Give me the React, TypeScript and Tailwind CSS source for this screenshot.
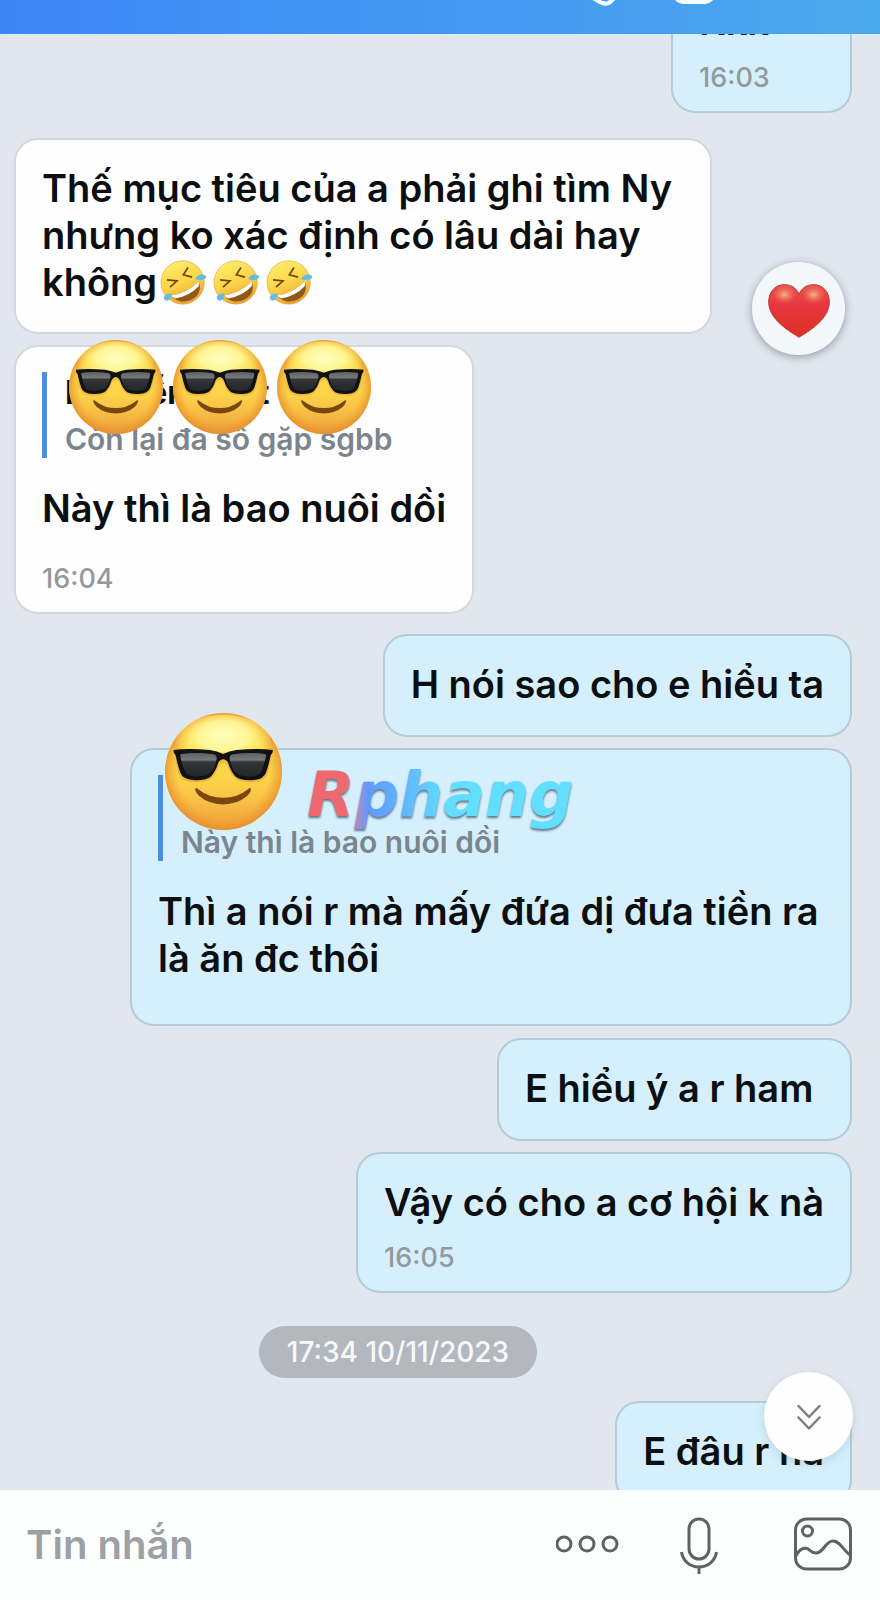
import type { ReactNode } from "react";

function CoolFace({ id, className }: { id: string; className: string }) {
  return (
    <svg viewBox="15 15 352 352" className={className} role="img" aria-label="😎">
      <defs>
        <linearGradient id={`${id}-skin`} x1="0" y1="0" x2="0" y2="1">
          <stop offset="0" stopColor="#fbdc58" />
          <stop offset="0.55" stopColor="#fdd54a" />
          <stop offset="0.75" stopColor="#f9c044" />
          <stop offset="1" stopColor="#ee9e3a" />
        </linearGradient>
        <radialGradient id={`${id}-rim`} cx="0.5" cy="0.5" r="0.5">
          <stop offset="0.76" stopColor="#f0a030" stopOpacity="0" />
          <stop offset="1" stopColor="#e58a2b" stopOpacity="0.75" />
        </radialGradient>
        <radialGradient id={`${id}-shine`} cx="0.5" cy="0.4" r="0.55">
          <stop offset="0" stopColor="#fffdc0" />
          <stop offset="0.5" stopColor="#fffba0" stopOpacity="0.85" />
          <stop offset="1" stopColor="#fdf04f" stopOpacity="0" />
        </radialGradient>
        <linearGradient id={`${id}-lens`} x1="0" y1="0" x2="0" y2="1">
          <stop offset="0" stopColor="#606163" />
          <stop offset="0.3" stopColor="#77787a" />
          <stop offset="0.38" stopColor="#343537" />
          <stop offset="1" stopColor="#242527" />
        </linearGradient>
      </defs>
      <circle cx="191" cy="191" r="176" fill={`url(#${id}-skin)`} />
      <circle cx="191" cy="191" r="176" fill={`url(#${id}-rim)`} />
      <ellipse cx="191" cy="100" rx="142" ry="80" fill={`url(#${id}-shine)`} />
      <path
        d="M45 134 H335 Q332 175 324 198 Q316 224 275 224 Q238 224 223 210 Q210 195 203 172 Q190 160 177 172 Q170 195 157 210 Q142 224 105 224 Q64 224 56 198 Q48 175 45 134Z"
        fill="#d98b1c"
        opacity="0.4"
      />
      <path
        d="M41 126 Q80 121 150 126 Q172 129 190 138 Q208 129 230 126 Q300 121 339 126 Q341 134 333 142 Q326 175 319 194 Q312 216 275 217 Q240 218 226 205 Q212 190 205 165 Q199 154 190 154 Q181 154 175 165 Q168 190 154 205 Q140 218 105 217 Q68 216 61 194 Q54 175 47 142 Q39 134 41 126Z"
        fill="#111213"
      />
      <path d="M64 138 Q110 132 160 139 Q173 142 170 155 Q165 184 149 197 Q138 206 108 206 Q79 205 74 189 Q65 165 61 144 Q60 139 64 138Z" fill={`url(#${id}-lens)`} />
      <path d="M316 138 Q270 132 220 139 Q207 142 210 155 Q215 184 231 197 Q242 206 272 206 Q301 205 306 189 Q315 165 319 144 Q320 139 316 138Z" fill={`url(#${id}-lens)`} />
      <path d="M106 242 Q109 238 116 245 Q148 270 190 270 Q232 270 264 245 Q270 238 273 242 Q276 250 262 265 Q232 290 190 290 Q147 290 118 265 Q104 250 106 242Z" fill="#7a470f" />
    </svg>
  );
}

function RoflFace({ id }: { id: string }) {
  return (
    <svg viewBox="14 25 141 134" className="mx-[3px] inline-block h-[45px] w-[47px] align-[-9px]" role="img" aria-label="🤣">
      <defs>
        <linearGradient id={id} x1="0.3" y1="0" x2="0.7" y2="1">
          <stop offset="0" stopColor="#ffee6a" />
          <stop offset="0.5" stopColor="#fbd448" />
          <stop offset="1" stopColor="#ec9734" />
        </linearGradient>
      </defs>
      <circle cx="82" cy="92" r="65" fill={`url(#${id})`} stroke="#e6a440" strokeWidth="2" />
      <path d="M35 84 L65 87 L44 106" fill="none" stroke="#704411" strokeWidth="5" />
      <path d="M98 47 L84 69 L110 76" fill="none" stroke="#704411" strokeWidth="5" />
      <path d="M46 131 Q100 122 130 88 Q140 112 124 132 Q104 153 74 148 Q56 143 46 131Z" fill="#8f5a17" />
      <path d="M46 131 Q100 122 130 88 Q133 95 130 103 Q104 131 60 140 Q51 136 46 131Z" fill="#fffdf6" />
      <path d="M120 83 Q122 72 136 68 Q150 66 153 75 Q150 88 120 83Z" fill="#62bce8" />
      <path d="M49 124 Q48 142 37 146 Q26 147 25 136 Q28 125 49 124Z" fill="#62bce8" />
    </svg>
  );
}

function Heart() {
  return (
    <svg viewBox="0 0 186 162" className="h-[54px] w-[62px]" aria-hidden="true">
      <defs>
        <linearGradient id="heart-fill" x1="0" y1="0" x2="0" y2="1">
          <stop offset="0" stopColor="#e8544c" />
          <stop offset="0.4" stopColor="#e8363f" />
          <stop offset="1" stopColor="#dc3122" />
        </linearGradient>
        <radialGradient id="heart-shine">
          <stop offset="0" stopColor="#f9b48b" />
          <stop offset="1" stopColor="#ee6f55" stopOpacity="0" />
        </radialGradient>
      </defs>
      <path
        d="M93 160 C70 145 2 108 2 54 C2 24 21 2 49 2 C71 2 86 13 93 31 C100 13 115 2 137 2 C165 2 184 24 184 54 C184 108 116 145 93 160Z"
        fill="url(#heart-fill)"
        stroke="#bd3936"
        strokeWidth="3"
      />
      <ellipse cx="49" cy="32" rx="36" ry="28" fill="url(#heart-shine)" />
      <ellipse cx="137" cy="32" rx="36" ry="28" fill="url(#heart-shine)" />
    </svg>
  );
}

type BubbleProps = { mine?: boolean; className?: string; children: ReactNode };

function Bubble({ mine, className = "", children }: BubbleProps) {
  const side = mine ? "self-end border-[#b5cbd6] bg-[#d5effc]" : "self-start border-[#d4d7dc] bg-[#fefefe]";
  return (
    <article className={`relative w-fit rounded-3xl border-2 px-[26px] pt-[25px] ${side} ${className}`}>{children}</article>
  );
}

function Message({ children }: { children: ReactNode }) {
  return <p className="text-[38px] leading-[47px] font-semibold text-[#0c0f11]">{children}</p>;
}

function Time({ className, children }: { className: string; children: string }) {
  return <time className={`block text-[27px] leading-[30px] font-medium text-[#94999d] ${className}`}>{children}</time>;
}

function Quote({ name, text }: { name?: string; text: string }) {
  return (
    <blockquote className="mb-[27px] flex h-[86px] flex-col justify-end gap-2 border-l-[5px] border-[#4c8edb] pl-[18px] leading-[38px]">
      {name && <span className="text-[32px] font-bold text-[#0c0f11]">{name}</span>}
      <span className="text-[30px] font-semibold text-[#7b858e]">{text}</span>
    </blockquote>
  );
}

export default function App() {
  return (
    <div className="flex h-screen flex-col overflow-hidden bg-[#e1e7ef] font-['Inter','Liberation_Sans',sans-serif]">
      <header className="flex h-[34px] shrink-0 items-end justify-end gap-14 overflow-hidden bg-linear-to-r from-[#3e86f6] to-[#4ba9ed] pr-[163px] pb-7">
        <button aria-label="Gọi thoại" className="shrink-0">
          <svg viewBox="0 0 44 44" className="size-11" fill="none" stroke="#fafdff" strokeWidth="4">
            <path d="M12 4 C7 5 3 9 5 16 C9 28 18 36 29 41 C35 43 39 40 42 34 L32 25 L27 31 C21 28 17 23 15 17 L19 12Z" />
          </svg>
        </button>
        <button aria-label="Gọi video" className="shrink-0">
          <svg viewBox="0 0 44 44" className="size-11" stroke="#fafdff" strokeWidth="4">
            <rect x="2" y="6" width="38" height="34" rx="8" fill="#b4cfe0" />
          </svg>
        </button>
      </header>

      <main className="relative flex min-h-0 flex-1 flex-col overflow-hidden pr-7 pl-[14px]">
        <Bubble mine className="-mt-[63px] min-w-[181px] shrink-0 pb-[18px]">
          <Message>Kkk</Message>
          <Time className="mt-[18px]">16:03</Time>
        </Bubble>

        <div className="relative mt-[25px] flex shrink-0">
          <Bubble className="max-w-[698px] pb-[26px]">
            <Message>
              Thế mục tiêu của a phải ghi tìm Ny nhưng ko xác định có lâu dài hay không
              <RoflFace id="rofl-1" />
              <RoflFace id="rofl-2" />
              <RoflFace id="rofl-3" />
            </Message>
          </Bubble>
          <button
            aria-label="Thả tim"
            className="absolute top-[124px] right-[7px] flex size-[93px] items-center justify-center rounded-full bg-[#f5f8fa] pt-1 shadow-[0_2px_8px_rgba(50,60,75,0.45)]"
          >
            <Heart />
          </button>
        </div>

        <Bubble className="mt-[11px] shrink-0 pb-[18px]">
          <Quote name="Nguyễn Nhật" text="Còn lại đa số gặp sgbb" />
          <Message>Này thì là bao nuôi dồi</Message>
          <Time className="mt-8">16:04</Time>
          <div className="absolute -top-[7px] left-[53px] flex gap-[10px]">
            <CoolFace id="cool-1" className="size-[94px]" />
            <CoolFace id="cool-2" className="size-[94px]" />
            <CoolFace id="cool-3" className="size-[94px]" />
          </div>
        </Bubble>

        <Bubble mine className="mt-5 shrink-0 pb-[27px]">
          <Message>H nói sao cho e hiểu ta</Message>
        </Bubble>

        <Bubble mine className="mt-[11px] max-w-[722px] shrink-0 pb-[42px]">
          <Quote text="Này thì là bao nuôi dồi" />
          <Message>Thì a nói r mà mấy đứa dị đưa tiền ra là ăn đc thôi</Message>
          <CoolFace id="cool-4" className="absolute -top-[37px] left-[33px] size-[117px]" />
          <span className="absolute top-[9px] left-[175px] bg-linear-to-r from-[#ee6870] from-14% via-[#5f98ff] via-22% to-[#62defe] to-52% bg-clip-text pr-2 font-['DejaVu_Sans',sans-serif] text-[62px] leading-[72px] font-bold text-transparent italic drop-shadow-[0_2px_1px_rgba(50,80,100,0.75)]">
            Rphang
          </span>
        </Bubble>

        <Bubble mine className="mt-3 min-w-[355px] shrink-0 pb-[27px]">
          <Message>E hiểu ý a r ham</Message>
        </Bubble>

        <Bubble mine className="mt-[11px] shrink-0 pb-[18px]">
          <Message>Vậy có cho a cơ hội k nà</Message>
          <Time className="mt-[17px]">16:05</Time>
        </Bubble>

        <time className="mt-[33px] mr-[70px] shrink-0 self-center rounded-full bg-[#b4b8be] px-7 py-[11px] text-[28px] leading-[30px] font-medium text-[#f6f8fb]">
          17:34 10/11/2023
        </time>

        <Bubble mine className="mt-[23px] shrink-0 pb-[27px]">
          <Message>E đâu r hả</Message>
        </Bubble>

        <button
          aria-label="Xuống cuối"
          className="absolute right-[27px] bottom-[29px] flex size-[89px] items-center justify-center rounded-full bg-[#fefefe] shadow-[0_3px_10px_rgba(70,90,110,0.18)]"
        >
          <svg viewBox="0 0 24 26" className="h-[26px] w-6" fill="none" stroke="#7c7e80" strokeWidth="2.500" strokeLinecap="round" strokeLinejoin="round">
            <path d="M1.500 2 L12 13 L22.500 2 M1.500 13.500 L12 24.500 L22.500 13.500" />
          </svg>
        </button>
      </main>

      <footer className="flex h-[110px] shrink-0 items-center bg-[#fdfefe] pr-7 pl-[26px]">
        <input
          aria-label="Tin nhắn"
          placeholder="Tin nhắn"
          className="min-w-0 flex-1 bg-transparent text-[40px] leading-[48px] font-semibold outline-none placeholder:text-[#9da1a4]"
        />
        <button aria-label="Thêm" className="mr-[60px]">
          <svg viewBox="0 0 64 60" className="h-[60px] w-16" fill="none" stroke="#606162" strokeWidth="3">
            <circle cx="8" cy="29" r="7" />
            <circle cx="31" cy="29" r="7" />
            <circle cx="54" cy="29" r="7" />
          </svg>
        </button>
        <button aria-label="Ghi âm" className="mr-[76px]">
          <svg viewBox="0 0 38 60" className="h-[60px] w-[38px]" fill="none" stroke="#606162" strokeWidth="3">
            <rect x="9" y="4" width="20" height="40" rx="10" />
            <path d="M1.500 37 C3 46 10 52 19 52 C28 52 35 46 36.500 37 M19 52 V59" />
          </svg>
        </button>
        <button aria-label="Gửi ảnh">
          <svg viewBox="0 0 58 60" className="h-[60px] w-[58px]" fill="none" stroke="#606162" strokeWidth="3">
            <rect x="1.500" y="4" width="55" height="50" rx="11" />
            <circle cx="13.500" cy="16" r="5" />
            <path d="M2 41 Q5 34 11 33 C16 33 16 38 22 38 C30 38 31 26 39 26 C46 26 49 35 56 40" />
          </svg>
        </button>
      </footer>
    </div>
  );
}
